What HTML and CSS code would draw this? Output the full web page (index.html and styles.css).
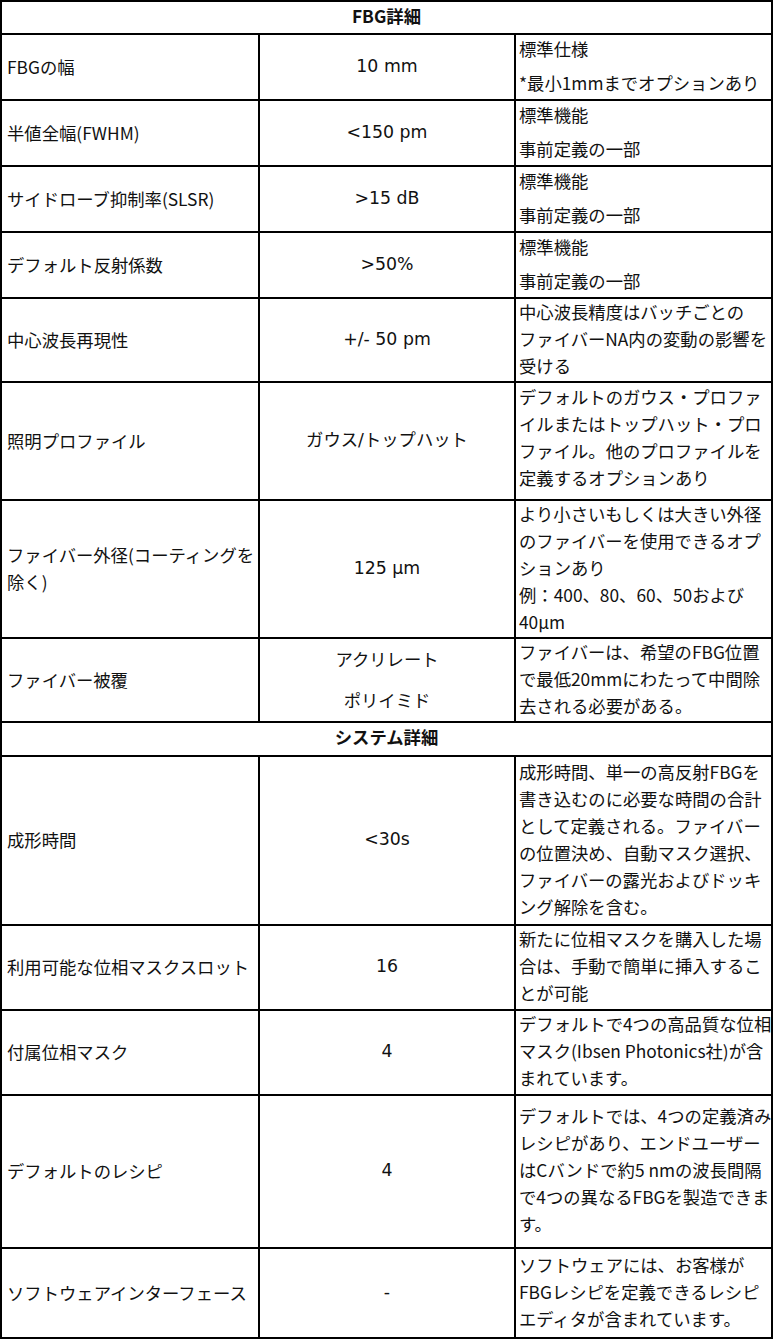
FILE: index.html
```html
<!DOCTYPE html>
<html lang="ja">
<head>
<meta charset="utf-8">
<title>FBG詳細</title>
<link rel="stylesheet" href="styles.css">
</head>
<body>
<div class="spec">
  <div class="cell section">FBG詳細</div>

  <div class="cell c1">FBGの幅</div>
  <div class="cell c2">10 mm</div>
  <div class="cell c3 c3-split"><p class="para">標準仕様</p><p class="para">*最小1mmまでオプションあり</p></div>

  <div class="cell c1">半値全幅(FWHM)</div>
  <div class="cell c2">&lt;150 pm</div>
  <div class="cell c3 c3-split"><p class="para">標準機能</p><p class="para">事前定義の一部</p></div>

  <div class="cell c1">サイドローブ抑制率(SLSR)</div>
  <div class="cell c2">&gt;15 dB</div>
  <div class="cell c3 c3-split"><p class="para">標準機能</p><p class="para">事前定義の一部</p></div>

  <div class="cell c1">デフォルト反射係数</div>
  <div class="cell c2">&gt;50%</div>
  <div class="cell c3 c3-split"><p class="para">標準機能</p><p class="para">事前定義の一部</p></div>

  <div class="cell c1">中心波長再現性</div>
  <div class="cell c2">+/- 50 pm</div>
  <div class="cell c3">中心波長精度はバッチごとの<br>ファイバーNA内の変動の影響を<br>受ける</div>

  <div class="cell c1">照明プロファイル</div>
  <div class="cell c2">ガウス/トップハット</div>
  <div class="cell c3 c3-start">デフォルトのガウス・プロファ<br>イルまたはトップハット・プロ<br>ファイル。他のプロファイルを<br>定義するオプションあり</div>

  <div class="cell c1">ファイバー外径(コーティングを<br>除く)</div>
  <div class="cell c2">125 µm</div>
  <div class="cell c3">より小さいもしくは大きい外径<br>のファイバーを使用できるオプ<br>ションあり<br>例：400、80、60、50および<br>40µm</div>

  <div class="cell c1">ファイバー被覆</div>
  <div class="cell c2 c2-split"><p class="para">アクリレート</p><p class="para">ポリイミド</p></div>
  <div class="cell c3">ファイバーは、希望のFBG位置<br>で最低20mmにわたって中間除<br>去される必要がある。</div>

  <div class="cell section">システム詳細</div>

  <div class="cell c1">成形時間</div>
  <div class="cell c2">&lt;30s</div>
  <div class="cell c3">成形時間、単一の高反射FBGを<br>書き込むのに必要な時間の合計<br>として定義される。ファイバー<br>の位置決め、自動マスク選択、<br>ファイバーの露光およびドッキ<br>ング解除を含む。</div>

  <div class="cell c1">利用可能な位相マスクスロット</div>
  <div class="cell c2">16</div>
  <div class="cell c3">新たに位相マスクを購入した場<br>合は、手動で簡単に挿入するこ<br>とが可能</div>

  <div class="cell c1">付属位相マスク</div>
  <div class="cell c2">4</div>
  <div class="cell c3">デフォルトで4つの高品質な位相<br>マスク(Ibsen Photonics社)が含<br>まれています。</div>

  <div class="cell c1">デフォルトのレシピ</div>
  <div class="cell c2">4</div>
  <div class="cell c3">デフォルトでは、4つの定義済み<br>レシピがあり、エンドユーザー<br>はCバンドで約5 nmの波長間隔<br>で4つの異なるFBGを製造できま<br>す。</div>

  <div class="cell c1">ソフトウェアインターフェース</div>
  <div class="cell c2">-</div>
  <div class="cell c3">ソフトウェアには、お客様が<br>FBGレシピを定義できるレシピ<br>エディタが含まれています。</div>
</div>
</body>
</html>
```

FILE: styles.css
```css
html, body {
  margin: 0;
  padding: 0;
  background: #ffffff;
}

.spec {
  display: grid;
  box-sizing: border-box;
  width: 773px;
  padding: 2px;
  gap: 2px;
  background: #000000;
  grid-template-columns: 256px 254px 255px;
  grid-template-rows: 31px 64px 64px 64px 64px 82px 116px 136px 82px 32px 167px 83px 83px 151px 88px;
  font-family: "Noto Sans CJK JP", "Noto Sans", sans-serif;
  font-size: 17.33px;
  line-height: 27px;
  color: #111111;
}

.cell {
  background: #ffffff;
  display: flex;
  flex-direction: column;
  justify-content: center;
  min-width: 0;
}

.section {
  grid-column: 1 / -1;
  align-items: center;
  font-weight: 700;
  padding-bottom: 5px;
}

.c1 {
  padding-left: 5px;
  padding-bottom: 2px;
  white-space: nowrap;
}

.c2 {
  align-items: center;
  text-align: center;
  padding-bottom: 2px;
  font-family: "DejaVu Sans", "Noto Sans CJK JP", sans-serif;
  white-space: nowrap;
}

.c3 {
  padding-left: 3px;
  padding-bottom: 4px;
  white-space: nowrap;
}

.para {
  margin: 0;
}

.c3-split,
.c3-start {
  justify-content: flex-start;
  padding-bottom: 0;
}

.c3-split .para + .para {
  margin-top: 7px;
}

.c2-split .para {
  font-family: "Noto Sans CJK JP", sans-serif;
}

.c2-split .para + .para {
  margin-top: 14px;
}
```
